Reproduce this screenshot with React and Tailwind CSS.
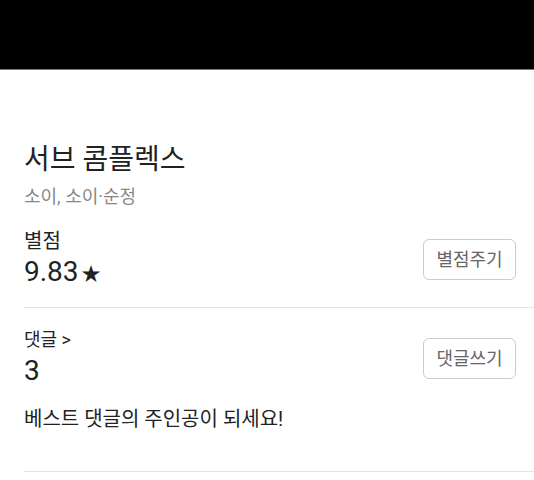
export default function App() {
  const font = { fontFamily: 'Roboto, "Noto Sans CJK KR", sans-serif' };

  return (
    <div className="w-[534px] h-[480px] bg-white overflow-hidden text-[#222]" style={font}>
      <div className="h-[70px] bg-black border-b border-[#777]" />

      <div className="pl-6">
        {/* Title */}
        <div className="pt-[73px]">
          <h1 className="text-[28px] leading-[34px] text-[#222]">서브 콤플렉스</h1>
          <p className="mt-[8px] text-[18px] leading-[24px] text-[#888]">소이, 소이·순정</p>
        </div>

        {/* Rating */}
        <div className="mt-[18px] flex items-center justify-between pr-[18px] pb-[15px] border-b border-[#e5e5e5]">
          <div>
            <p className="text-[20px] leading-[28px]">별점</p>
            <p className="text-[28px] leading-[34px]">
              9.83<span className="ml-[3px] text-[19px]">★</span>
            </p>
          </div>
          <button className="w-[93px] h-[41px] rounded-[6px] border border-[#ccc] text-[18px] text-[#666]">
            별점주기
          </button>
        </div>

        {/* Comments */}
        <div className="pt-[20px] flex items-center justify-between pr-[18px]">
          <div>
            <p className="text-[18px] leading-[24px]">댓글 &gt;</p>
            <p className="mt-[2px] text-[28px] leading-[34px]">3</p>
          </div>
          <button className="w-[93px] h-[41px] rounded-[6px] border border-[#ccc] text-[18px] text-[#666]">
            댓글쓰기
          </button>
        </div>

        <div className="pt-[17px] pb-[38px] border-b border-[#e5e5e5]">
          <p className="text-[20px] leading-[28px]">베스트 댓글의 주인공이 되세요!</p>
        </div>
      </div>
    </div>
  );
}
